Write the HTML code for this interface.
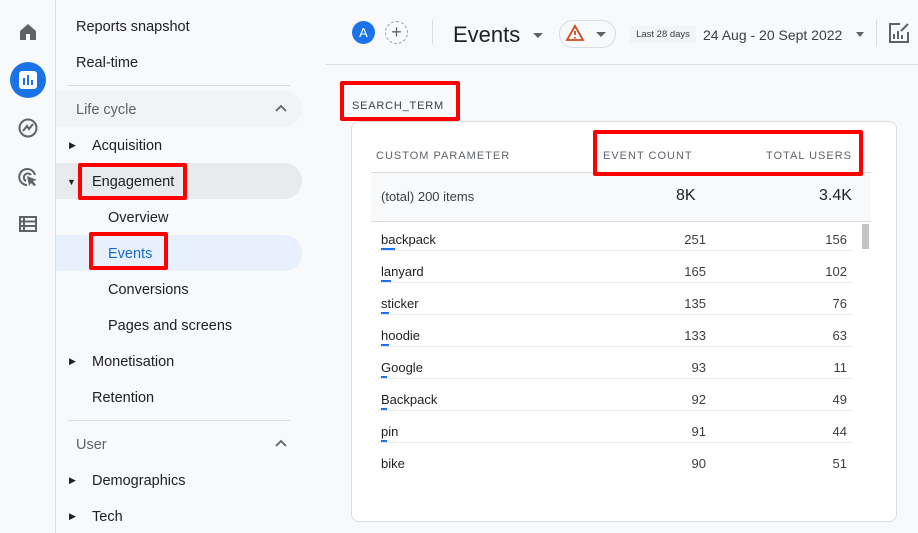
<!DOCTYPE html>
<html><head><style>
*{margin:0;padding:0;box-sizing:border-box}
body{width:918px;height:533px;overflow:hidden;background:#f8f9fa;font-family:"Liberation Sans",Arial,sans-serif;color:#202124;position:relative}
.abs{position:absolute}
.rail{left:0;top:0;width:56px;height:533px;border-right:1px solid #dadce0;background:#f8f9fa}
.nav div.t{position:absolute;font-size:14.5px;white-space:nowrap}
.red{position:absolute;border:4px solid #f00;border-radius:2px}
.row{position:absolute;left:381px;width:466px;height:32px;font-size:13px;color:#202124}
.row .n{position:absolute;left:0;top:8px}
.row .a{position:absolute;right:141px;top:8px;color:#3c4043}
.row .b{position:absolute;right:0;top:8px;color:#3c4043}
.row .bar{position:absolute;left:0;top:24px;height:2px;background:#1a73e8}
.row .ln{position:absolute;left:-4px;right:-6px;top:26px;height:1px;background:#e8eaed}
.chev{position:absolute;left:275px}
</style></head><body>
<div class="abs rail"></div>
<svg class="abs" style="left:18px;top:22px" width="20" height="20" viewBox="0 0 20 20"><path d="M10 2 L2 9 V18 H8 V12 H12 V18 H18 V9 Z" fill="#5f6368"/></svg>
<div class="abs" style="left:10px;top:62px;width:36px;height:36px;border-radius:50%;background:#1a73e8"></div>
<div class="abs" style="left:19px;top:71px;width:18px;height:18px;border-radius:3px;background:#fff"></div>
<div class="abs" style="left:23px;top:78px;width:2px;height:7px;background:#1a73e8"></div>
<div class="abs" style="left:27px;top:75px;width:2px;height:10px;background:#1a73e8"></div>
<div class="abs" style="left:31px;top:80px;width:2px;height:5px;background:#1a73e8"></div>
<svg class="abs" style="left:17px;top:117px" width="22" height="22" viewBox="0 0 22 22"><circle cx="11" cy="11" r="8.5" fill="none" stroke="#5f6368" stroke-width="2"/><path d="M6 14 L10 9 L12 12 L16 7" fill="none" stroke="#5f6368" stroke-width="2"/></svg>
<svg class="abs" style="left:17px;top:166px" width="22" height="22" viewBox="0 0 22 22"><path d="M18 9 A8 8 0 1 0 10 19" fill="none" stroke="#5f6368" stroke-width="2"/><path d="M14 9 A4 4 0 1 0 9 15" fill="none" stroke="#5f6368" stroke-width="2"/><path d="M10 10 L20 14 L16 15 L19 19 L17 20 L14 17 L12 20 Z" fill="#5f6368"/></svg>
<svg class="abs" style="left:19px;top:216px" width="18" height="16" viewBox="0 0 18 16"><rect x="1" y="1" width="16" height="14" fill="none" stroke="#5f6368" stroke-width="2"/><path d="M1 5.5H17M1 10H17M5 1V15" stroke="#5f6368" stroke-width="2"/></svg>

<div class="nav">
<div class="t" style="left:76px;top:19px">Reports snapshot</div>
<div class="t" style="left:76px;top:55px">Real-time</div>
<div class="abs" style="left:68px;top:85px;width:222px;height:1px;background:#dadce0"></div>
<div class="abs" style="left:56px;top:91px;width:246px;height:36px;background:#f1f3f4;border-radius:0 18px 18px 0"></div>
<div class="t" style="left:76px;top:102px;color:#5f6368">Life cycle</div>
<svg class="chev" style="top:104px" width="12" height="8" viewBox="0 0 12 8"><path d="M1 7 L6 2 L11 7" fill="none" stroke="#5f6368" stroke-width="1.8"/></svg>
<div class="t" style="left:69px;top:140px;font-size:9px">&#9654;</div>
<div class="t" style="left:92px;top:138px">Acquisition</div>
<div class="abs" style="left:56px;top:163px;width:246px;height:36px;background:#e8eaed;border-radius:0 18px 18px 0"></div>
<div class="t" style="left:67px;top:177px;font-size:9px">&#9660;</div>
<div class="t" style="left:92px;top:174px">Engagement</div>
<div class="red" style="left:78px;top:163px;width:109px;height:37px"></div>
<div class="t" style="left:108px;top:210px">Overview</div>
<div class="abs" style="left:56px;top:235px;width:246px;height:36px;background:#e8f0fe;border-radius:0 18px 18px 0"></div>
<div class="t" style="left:108px;top:246px;color:#1967d2">Events</div>
<div class="red" style="left:89px;top:232px;width:79px;height:38px"></div>
<div class="t" style="left:108px;top:282px">Conversions</div>
<div class="t" style="left:108px;top:318px">Pages and screens</div>
<div class="t" style="left:69px;top:356px;font-size:9px">&#9654;</div>
<div class="t" style="left:92px;top:354px">Monetisation</div>
<div class="t" style="left:92px;top:390px">Retention</div>
<div class="abs" style="left:68px;top:420px;width:222px;height:1px;background:#dadce0"></div>
<div class="t" style="left:76px;top:437px;color:#5f6368">User</div>
<svg class="chev" style="top:439px" width="12" height="8" viewBox="0 0 12 8"><path d="M1 7 L6 2 L11 7" fill="none" stroke="#5f6368" stroke-width="1.8"/></svg>
<div class="t" style="left:69px;top:475px;font-size:9px">&#9654;</div>
<div class="t" style="left:92px;top:473px">Demographics</div>
<div class="t" style="left:69px;top:511px;font-size:9px">&#9654;</div>
<div class="t" style="left:92px;top:509px">Tech</div>
</div>

<div class="abs" style="left:326px;top:64px;width:592px;height:1px;background:#dadce0"></div>
<div class="abs" style="left:352px;top:21px;width:23px;height:23px;border-radius:50%;background:#1a73e8;color:#fff;font-size:13px;text-align:center;line-height:23px">A</div>
<div class="abs" style="left:385px;top:21px;width:23px;height:23px;border-radius:50%;border:1px dashed #9aa0a6;color:#5f6368;font-size:18px;text-align:center;line-height:20px">+</div>
<div class="abs" style="left:432px;top:20px;width:1px;height:24px;background:#dadce0"></div>
<div class="abs" style="left:453px;top:22px;font-size:22px;color:#202124">Events</div>
<div class="abs" style="left:533px;top:33px;width:0;height:0;border-left:5px solid transparent;border-right:5px solid transparent;border-top:5px solid #5f6368"></div>
<div class="abs" style="left:559px;top:20px;width:57px;height:28px;border:1px solid #dadce0;border-radius:14px"></div>
<svg class="abs" style="left:565px;top:24px" width="20" height="18" viewBox="0 0 20 18"><path d="M10 2 L18 16 H2 Z" fill="none" stroke="#d14b1f" stroke-width="1.8"/><path d="M10 7V11M10 13V14.5" stroke="#d14b1f" stroke-width="1.8"/></svg>
<div class="abs" style="left:596px;top:32px;width:0;height:0;border-left:5px solid transparent;border-right:5px solid transparent;border-top:5px solid #5f6368"></div>
<div class="abs" style="left:630px;top:26px;width:66px;height:17px;background:#f1f3f4;font-size:9.5px;color:#3c4043;text-align:center;line-height:17px">Last 28 days</div>
<div class="abs" style="left:703px;top:27px;font-size:14px;color:#3c4043">24 Aug - 20 Sept 2022</div>
<div class="abs" style="left:856px;top:32px;width:0;height:0;border-left:4.5px solid transparent;border-right:4.5px solid transparent;border-top:5px solid #5f6368"></div>
<div class="abs" style="left:876px;top:20px;width:1px;height:26px;background:#dadce0"></div>
<svg class="abs" style="left:888px;top:22px" width="22" height="22" viewBox="0 0 22 22"><path d="M12 2H2V20H20V10" fill="none" stroke="#5f6368" stroke-width="2"/><path d="M6 17V12M10 17V9M14 17V13" stroke="#5f6368" stroke-width="2"/><path d="M13 9 L20 2" stroke="#5f6368" stroke-width="2"/></svg>

<div class="abs" style="left:352px;top:100px;font-size:11px;letter-spacing:.8px;color:#3c4043">SEARCH_TERM</div>
<div class="red" style="left:340px;top:81px;width:120px;height:40px"></div>

<div class="abs" style="left:351px;top:121px;width:546px;height:401px;background:#fff;border:1px solid #dadce0;border-radius:8px"></div>
<div class="abs" style="left:376px;top:150px;font-size:11px;letter-spacing:1px;color:#5f6368">CUSTOM PARAMETER</div>
<div class="abs" style="left:603px;top:150px;font-size:11px;letter-spacing:1px;color:#5f6368">EVENT COUNT</div>
<div class="abs" style="left:766px;top:150px;font-size:11px;letter-spacing:1px;color:#5f6368">TOTAL USERS</div>
<div class="abs" style="left:371px;top:172px;width:500px;height:50px;background:#f8f9fa;border-top:1px solid #dadce0;border-bottom:1px solid #dadce0"></div>
<div class="red" style="left:593px;top:130px;width:270px;height:46px"></div>
<div class="abs" style="left:381px;top:189px;font-size:13px;color:#3c4043">(total) 200 items</div>
<div class="abs" style="left:676px;top:187px;font-size:16px">8K</div>
<div class="abs" style="left:819px;top:187px;font-size:16px">3.4K</div>
<div class="abs" style="left:862px;top:224px;width:7px;height:25px;background:#c4c4c4"></div>

<div class="row" style="top:224px"><span class="n">backpack</span><span class="a">251</span><span class="b">156</span><div class="bar" style="width:14px"></div><div class="ln"></div></div>
<div class="row" style="top:256px"><span class="n">lanyard</span><span class="a">165</span><span class="b">102</span><div class="bar" style="width:10px"></div><div class="ln"></div></div>
<div class="row" style="top:288px"><span class="n">sticker</span><span class="a">135</span><span class="b">76</span><div class="bar" style="width:8px"></div><div class="ln"></div></div>
<div class="row" style="top:320px"><span class="n">hoodie</span><span class="a">133</span><span class="b">63</span><div class="bar" style="width:8px"></div><div class="ln"></div></div>
<div class="row" style="top:352px"><span class="n">Google</span><span class="a">93</span><span class="b">11</span><div class="bar" style="width:6px"></div><div class="ln"></div></div>
<div class="row" style="top:384px"><span class="n">Backpack</span><span class="a">92</span><span class="b">49</span><div class="bar" style="width:6px"></div><div class="ln"></div></div>
<div class="row" style="top:416px"><span class="n">pin</span><span class="a">91</span><span class="b">44</span><div class="bar" style="width:6px"></div><div class="ln"></div></div>
<div class="row" style="top:448px"><span class="n">bike</span><span class="a">90</span><span class="b">51</span></div>
</body></html>
